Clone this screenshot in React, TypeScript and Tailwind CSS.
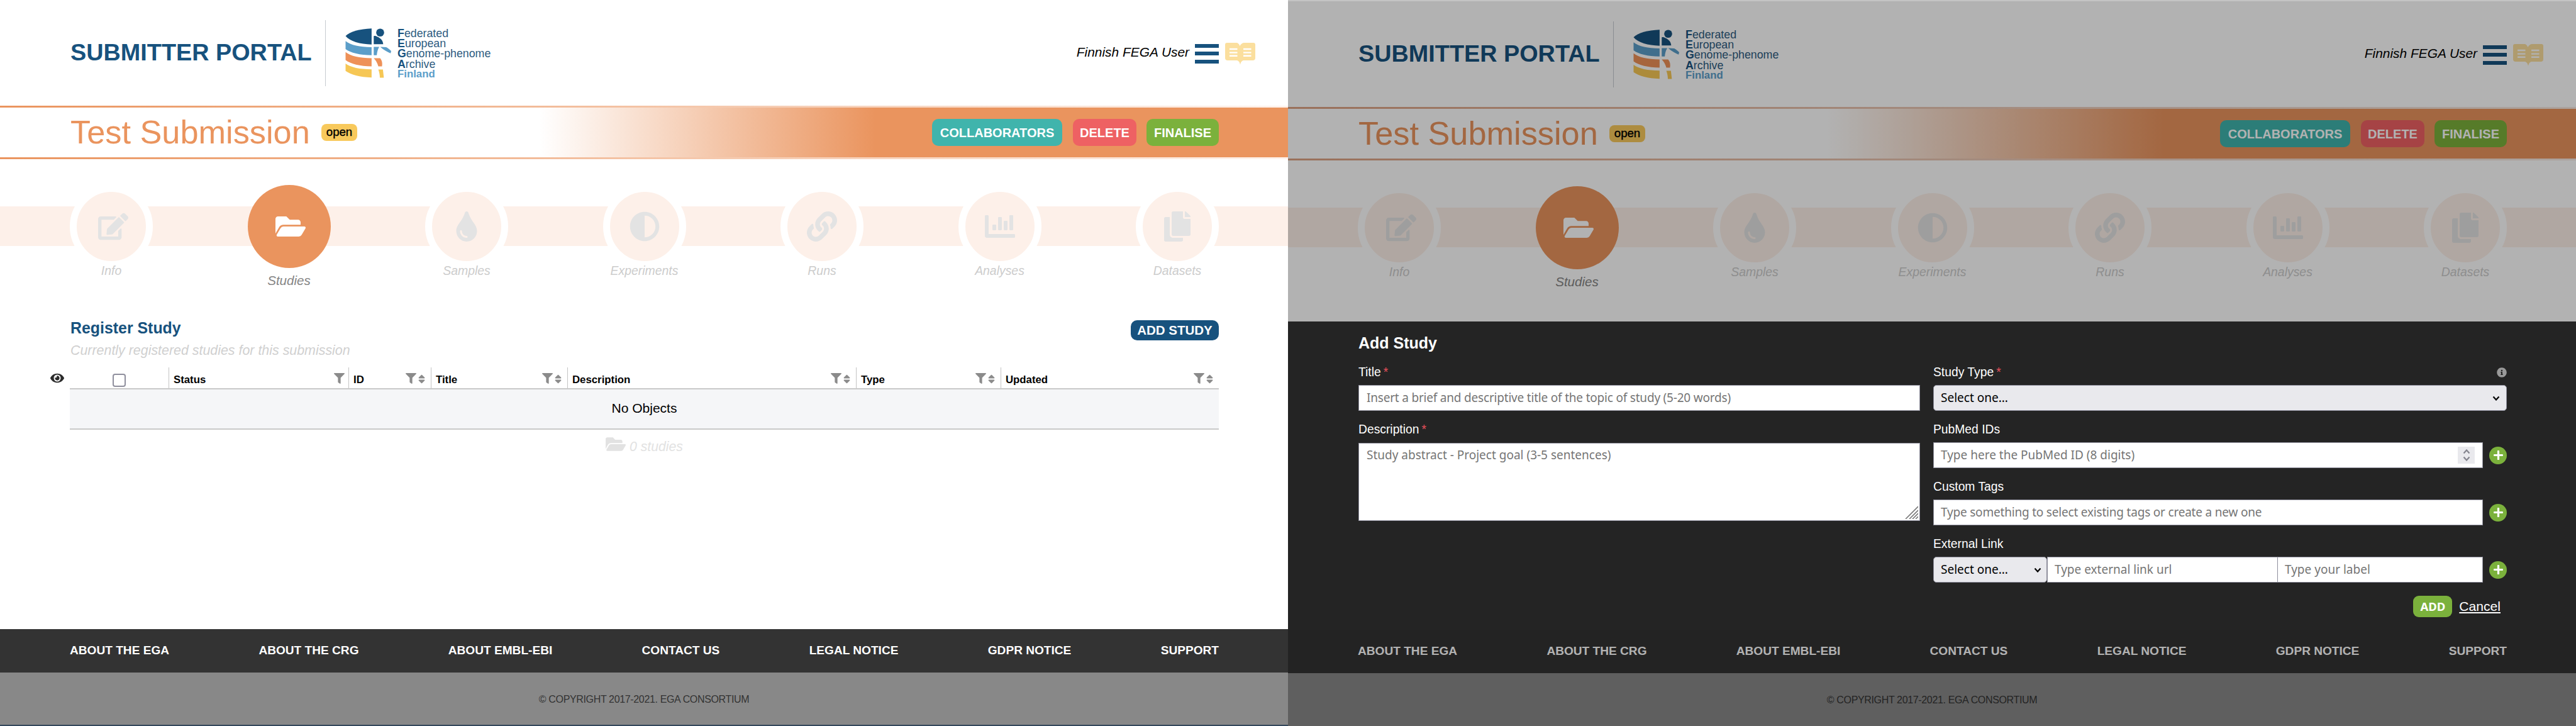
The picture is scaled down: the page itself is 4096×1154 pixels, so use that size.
import React from "react";
import {
  FaAdjust,
  FaChartBar,
  FaCopy,
  FaEdit,
  FaEye,
  FaFilter,
  FaFolderOpen,
  FaInfoCircle,
  FaLink,
  FaPlus,
  FaSort,
  FaTint,
} from "react-icons/fa";

const steps = [
  { label: "Info", Icon: FaEdit, nudge: "ml-[6px] w-auto" },
  { label: "Studies", Icon: FaFolderOpen, active: true, nudge: "ml-[5px] w-auto" },
  { label: "Samples", Icon: FaTint, nudge: "w-auto" },
  { label: "Experiments", Icon: FaAdjust, nudge: "w-auto" },
  { label: "Runs", Icon: FaLink, nudge: "w-auto" },
  { label: "Analyses", Icon: FaChartBar, nudge: "w-auto" },
  { label: "Datasets", Icon: FaCopy, nudge: "w-auto" },
];

const columns = [
  { label: "Status", width: "w-[286px]", sortable: false },
  { label: "ID", width: "w-[131px]", sortable: true },
  { label: "Title", width: "w-[217px]", sortable: true },
  { label: "Description", width: "w-[459px]", sortable: true },
  { label: "Type", width: "w-[230px]", sortable: true },
  { label: "Updated", width: "flex-1", sortable: true },
];

const footerLinks = [
  "ABOUT THE EGA",
  "ABOUT THE CRG",
  "ABOUT EMBL-EBI",
  "CONTACT US",
  "LEGAL NOTICE",
  "GDPR NOTICE",
  "SUPPORT",
];

function LogoMark() {
  return (
    <svg width="73" height="80" viewBox="0 0 300 330" preserveAspectRatio="none">
      <path d="M172 5 C95 8 30 25 2 55 C30 90 95 108 172 110 Z" fill="#17527e" />
      <path d="M2 88 C35 115 95 128 172 128 L172 180 C95 180 35 165 2 140 Z" fill="#5b9ec9" />
      <path d="M2 160 C35 187 95 200 172 200 L172 254 C95 252 35 237 2 212 Z" fill="#ee9158" />
      <path d="M2 235 C35 260 95 273 172 273 L172 327 C95 325 35 308 2 284 Z" fill="#f6c755" />
      <circle cx="228" cy="32" r="26" fill="#17527e" />
      <path d="M186 56 C192 52 200 54 210 60 C232 68 246 86 248 108 L186 108 Z" fill="#17527e" />
      <path d="M186 126 L222 126 C212 142 208 160 206 180 L186 180 Z" fill="#5b9ec9" />
      <path d="M228 126 L268 128 C282 136 294 146 300 154 L296 168 C276 160 252 148 228 126 Z" fill="#5b9ec9" />
      <path d="M186 200 L228 200 C240 214 244 232 240 254 L216 254 C210 232 200 214 186 200 Z" fill="#ee9158" />
      <path d="M216 274 L246 274 L252 328 L226 328 C226 308 222 290 216 274 Z" fill="#f6c755" />
    </svg>
  );
}

function Logo() {
  return (
    <div className="flex items-center pl-[31px]">
      <LogoMark />
      <div className="ml-[10px] mt-[3px] text-[17.8px] leading-[16.2px] text-[#2d5b80]">
        {["Federated", "European", "Genome-phenome", "Archive"].map((word) => (
          <div key={word}>
            <b className="text-[#17527e]">{word[0]}</b>
            {word.slice(1)}
          </div>
        ))}
        <div className="text-[16.8px] font-bold text-[#5b9ec9]">Finland</div>
      </div>
    </div>
  );
}

function Book() {
  return (
    <svg width="48" height="35" viewBox="0 0 48 35">
      <path
        d="M3 0 H17 C21 0 22 2 23.5 5 C25 2 27 0 31 0 H45 Q48 0 48 3 V24 Q48 28 44 28 H30 C27 28 25 30 24 35 C23 30 21 28 18 28 H4 Q0 28 0 24 V3 Q0 0 3 0 Z"
        fill="#fbdf9e"
      />
      <path d="M7 10 H19.5 M7 15.6 H19.5 M7 20.8 H19.5 M29 10 H41.5 M29 15.6 H41.5 M29 20.8 H41.5" stroke="#fff" strokeWidth="2.4" />
    </svg>
  );
}

function Header() {
  return (
    <header className="flex h-[168px] shrink-0 items-center pl-[112px] pr-[52px]">
      <h1 className="w-[384px] whitespace-nowrap text-[37.8px] font-bold leading-none text-[#17527e]">SUBMITTER PORTAL</h1>
      <div className="ml-[21px] h-[105px] w-px bg-[#c6cbd0]" />
      <Logo />
      <span className="mb-px ml-auto text-[20.9px] italic leading-none text-black">Finnish FEGA User</span>
      <div className="ml-[9px] mt-[2px] flex flex-col gap-[6.5px]">
        <div className="h-[6px] w-[38px] bg-[#17527e]" />
        <div className="h-[6px] w-[38px] bg-[#17527e]" />
        <div className="h-[6px] w-[38px] bg-[#17527e]" />
      </div>
      <div className="ml-[10px] mt-[3px]">
        <Book />
      </div>
    </header>
  );
}

function TitleBar({ dimmed }: { dimmed?: boolean }) {
  return (
    <div
      className={
        "h-[85px] shrink-0 py-[3px] " +
        (dimmed
          ? "bg-[linear-gradient(to_right,#dca182,#f6e9e2)]"
          : "bg-[linear-gradient(to_right,#ea945e,#fef3ed)]")
      }
    >
      <div className="flex h-[79px] items-center bg-[linear-gradient(to_right,#ffffff_858px,#ea945e_1392px)] pl-[112px] pr-[110px]">
        <h2 className="w-[380px] whitespace-nowrap text-[52.3px] leading-none text-[#ea945e]">Test Submission</h2>
        <span className="ml-[19px] flex h-[27px] w-[57px] items-center justify-center rounded-[8px] bg-[#f8c95c] text-[18.6px] leading-none text-black [-webkit-text-stroke:0.4px_black]">
          open
        </span>
        <div className="ml-auto flex text-[20px] font-bold leading-none text-white">
          <span className="flex h-[43px] w-[207px] items-center justify-center rounded-[10px] bg-[#40b4ac] pt-px">COLLABORATORS</span>
          <span className="ml-[17px] flex h-[43px] w-[101px] items-center justify-center rounded-[10px] bg-[#ee6163] pt-px">DELETE</span>
          <span className="ml-[16px] flex h-[43px] w-[115px] items-center justify-center rounded-[10px] bg-[#7bb13c] pt-px">FINALISE</span>
        </div>
      </div>
    </div>
  );
}

function Stepper() {
  return (
    <nav className="flex h-[220px] shrink-0 justify-between bg-[linear-gradient(to_bottom,transparent_75px,#fdf0e9_75px,#fdf0e9_138px,transparent_138px)] pl-[111px] pr-[110px] pt-[41px]">
      {steps.map(({ label, Icon, active, nudge }) => (
        <div key={label} className="flex w-[132px] flex-col items-center">
          {active ? (
            <div className="flex size-[132px] items-center justify-center rounded-full bg-[#ea945e] text-white">
              <Icon size={48} className={nudge} />
            </div>
          ) : (
            <div className="flex size-[132px] items-center justify-center rounded-full border-[11px] border-white bg-[#fdf0e9] text-[#e3e3e3]">
              <Icon size={48} className={nudge} />
            </div>
          )}
          {active ? (
            <span className="mt-[10px] text-[20.6px] italic leading-[20px] text-[#858585]">{label}</span>
          ) : (
            <span className="-mt-[6px] text-[19.4px] italic leading-[20px] text-[#cccccc]">{label}</span>
          )}
        </div>
      ))}
    </nav>
  );
}

function StudyTable() {
  return (
    <div className="mt-[13px] flex">
      <div className="flex h-[33px] w-[32px] shrink-0 items-center text-[#2b2b2b]">
        <FaEye size={22} className="ml-px w-auto" />
      </div>
      <div className="flex-1">
        <div className="flex h-[34.5px] border-b-2 border-[#c9c9c9]">
          <div className="flex w-[157px] items-center justify-center pt-[8px]">
            <div className="size-[21px] rounded-[4px] border-2 border-[#8f8f9d] bg-white" />
          </div>
          {columns.map(({ label, width, sortable }) => (
            <div key={label} className={width + " flex items-center border-l border-[#c4c4c4] pl-[7px] text-[#8b8b8b] " + (sortable ? "pr-[9px]" : "pr-[6px]")}>
              <span className="pt-[9px] text-[16.8px] font-bold leading-none text-black">{label}</span>
              <FaFilter size={17} className="ml-auto mt-[3px]" />
              {sortable && <FaSort size={19} className="ml-[3px] mt-[4px] w-[11px]" />}
            </div>
          ))}
        </div>
        <div className="flex h-[64px] items-center justify-center border-b-2 border-[#c9c9c9] bg-[#f5f6f8] pb-[2px] text-[21px] leading-none text-black">
          No Objects
        </div>
      </div>
    </div>
  );
}

function Studies() {
  return (
    <main className="flex-1 pl-[79px] pr-[110px] pt-[36px]">
      <div className="pl-[33px]">
        <div className="flex h-[32px] items-start justify-between">
          <h3 className="text-[24.9px] font-bold leading-[25px] text-[#17527e]">Register Study</h3>
          <span className="flex h-[32px] w-[140px] items-center justify-center rounded-[10px] bg-[#17527e] pt-px text-[20.5px] font-bold leading-none text-white">
            ADD STUDY
          </span>
        </div>
        <p className="mt-[3px] text-[21.4px] italic leading-[27px] text-[#d0d0d0]">
          Currently registered studies for this submission
        </p>
      </div>
      <StudyTable />
      <div className="flex items-center justify-center gap-[6px] pl-[32px] pt-[7px] text-[#e2e2e2]">
        <FaFolderOpen size={32} className="w-auto" />
        <span className="pt-[9px] text-[21.2px] italic leading-none">0 studies</span>
      </div>
    </main>
  );
}

function Footer({ dimmed }: { dimmed?: boolean }) {
  return (
    <footer className="shrink-0 font-bold">
      <div className="flex h-[69px] items-center justify-between bg-[#333333] pb-[2px] pl-[111px] pr-[110px] text-[19.1px] leading-none text-white">
        {footerLinks.map((link) => (
          <span key={link}>{link}</span>
        ))}
      </div>
      <div
        className={
          "flex items-center justify-center bg-[#888888] pt-[2px] text-[16px] font-normal leading-none tracking-[-0.35px] text-[#333333] " +
          (dimmed ? "h-[84px]" : "h-[83px]")
        }
      >
        © COPYRIGHT 2017-2021. EGA CONSORTIUM
      </div>
    </footer>
  );
}

function Portal({ dimmed }: { dimmed?: boolean }) {
  return (
    <div className="flex h-[1152px] w-[2048px] flex-col bg-white">
      <Header />
      <TitleBar dimmed={dimmed} />
      <Stepper />
      {dimmed ? <div className="flex-1" /> : <Studies />}
      <Footer dimmed={dimmed} />
    </div>
  );
}

function Label({ text, required }: { text: string; required?: boolean }) {
  return (
    <div className="flex h-[20px] text-[19.3px] leading-[20px] text-white">
      {text}
      {required && <span className="ml-[4px] text-[#e8505b]">*</span>}
    </div>
  );
}

function Chevron({ up, className }: { up?: boolean; className?: string }) {
  return (
    <svg width="12" height="8" viewBox="0 0 12 8" className={className}>
      <path d={up ? "M1.5 6.5 L6 1.5 L10.5 6.5" : "M1.5 1.5 L6 6.5 L10.5 1.5"} fill="none" stroke="currentColor" strokeWidth="2.2" />
    </svg>
  );
}

function AddButton() {
  return (
    <div className="ml-[10px] flex size-[28px] shrink-0 items-center justify-center rounded-full bg-[#7bb13c] text-white">
      <FaPlus size={17} />
    </div>
  );
}

const field = "flex items-center border-[1.5px] border-[#8f8f9d] bg-white font-['Noto_Sans',sans-serif] text-[19px] leading-none text-[#757575] ";
const select = "flex items-center justify-between rounded-[5px] border-[1.5px] border-[#8f8f9d] bg-[#e9e9ed] font-['Noto_Sans',sans-serif] text-[19px] leading-none text-black ";

function AddStudyDialog() {
  return (
    <div className="absolute left-0 top-[511px] h-[491px] w-[2048px] bg-[#242424] pl-[112px] pr-[110px] pt-[21px] text-white">
      <h3 className="text-[25px] font-bold leading-[26px]">Add Study</h3>
      <div className="mt-[24px] flex gap-[21px]">
        <div className="w-[893px]">
          <Label text="Title" required />
          <div className={field + "mt-[10px] h-[41px] pl-[12px] tracking-[-0.2px]"}>
            Insert a brief and descriptive title of the topic of study (5-20 words)
          </div>
          <div className="mt-[20px]">
            <Label text="Description" required />
          </div>
          <div className="relative mt-[11px] flex h-[124px] border-[1.5px] border-[#8f8f9d] bg-white pl-[12px] pt-[8px] font-['Noto_Sans',sans-serif] text-[19px] leading-[20px] text-[#757575]">
            Study abstract - Project goal (3-5 sentences)
            <svg className="absolute bottom-[2px] right-[2px]" width="21" height="21" viewBox="0 0 21 21">
              <path d="M1 21 L21 1 M7 21 L21 7 M12 21 L21 12 M17 21 L21 17" stroke="#777" strokeWidth="1.6" />
            </svg>
          </div>
        </div>
        <div className="w-[912px]">
          <div className="flex justify-between">
            <Label text="Study Type" required />
            <FaInfoCircle size={16} className="mt-[2px] text-[#999999]" />
          </div>
          <div className={select + "mt-[10px] h-[41px] pl-[11px] pr-[10px]"}>
            Select one...
            <Chevron />
          </div>
          <div className="mt-[20px]">
            <Label text="PubMed IDs" />
          </div>
          <div className="mt-[10px] flex items-center">
            <div className={field + "h-[41px] w-[874px] justify-between pl-[11px] pr-[12px]"}>
              Type here the PubMed ID (8 digits)
              <span className="flex h-[27px] w-[27px] flex-col items-center justify-between bg-[#e9e9ed] py-[4px] text-[#84848e]">
                <Chevron up />
                <Chevron />
              </span>
            </div>
            <AddButton />
          </div>
          <div className="mt-[20px]">
            <Label text="Custom Tags" />
          </div>
          <div className="mt-[10px] flex items-center">
            <div className={field + "h-[41px] w-[874px] pl-[11px] tracking-[-0.2px]"}>
              Type something to select existing tags or create a new one
            </div>
            <AddButton />
          </div>
          <div className="mt-[20px]">
            <Label text="External Link" />
          </div>
          <div className="mt-[10px] flex items-center">
            <div className={select + "h-[41px] w-[181px] pl-[11px] pr-[8px]"}>
              Select one...
              <Chevron />
            </div>
            <div className={field + "h-[41px] w-[367px] pl-[11px]"}>Type external link url</div>
            <div className={field + "-ml-px h-[41px] w-[327px] pl-[11px]"}>Type your label</div>
            <AddButton />
          </div>
          <div className="mt-[21px] flex items-center justify-end pr-[10px]">
            <span className="flex h-[34px] w-[62px] items-center justify-center rounded-[9px] bg-[#7bb13c] pt-px font-['Noto_Sans',sans-serif] text-[18.5px] font-bold leading-none">
              ADD
            </span>
            <span className="ml-[11px] text-[21.1px] leading-none underline">Cancel</span>
          </div>
        </div>
      </div>
    </div>
  );
}

export default function App() {
  return (
    <div className="flex h-[1154px] w-[4096px] overflow-hidden bg-[#33475b] font-['Liberation_Sans',Arial,sans-serif]">
      <Portal />
      <div className="relative h-[1154px] w-[2048px] overflow-hidden bg-[#c4c4c4] pt-[2px]">
        <div className="relative">
          <Portal dimmed />
          <div className="absolute inset-0 bg-black/30" />
        </div>
        <AddStudyDialog />
      </div>
    </div>
  );
}
